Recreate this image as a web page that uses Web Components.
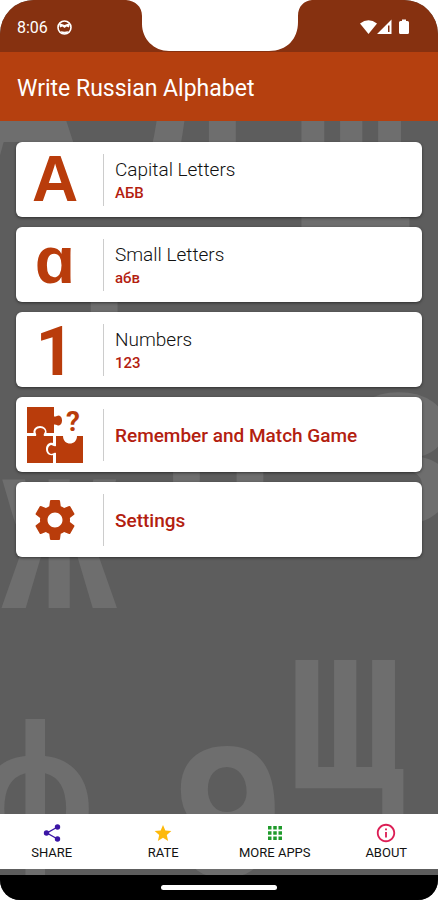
<!DOCTYPE html>
<html lang="en">
<head>
<meta charset="utf-8">
<meta name="viewport" content="width=device-width, initial-scale=1">
<title>Write Russian Alphabet</title>
<style>
    body {
        margin: 0;
        background: #fff;
        font-family: Roboto, "Liberation Sans", sans-serif;
    }
</style>
</head>
<body>
<phone-screen>
    <status-bar slot="top" time="8:06"></status-bar>
    <app-bar slot="top">Write Russian Alphabet</app-bar>

    <menu-card label="Capital Letters" sample="АБВ">
        <big-glyph slot="icon" size="64">A</big-glyph>
    </menu-card>
    <menu-card label="Small Letters" sample="абв">
        <big-glyph slot="icon" size="66" lowercase>ɑ</big-glyph>
    </menu-card>
    <menu-card label="Numbers" sample="123">
        <big-glyph slot="icon" size="68" digit>1</big-glyph>
    </menu-card>
    <menu-card label="Remember and Match Game" strong>
        <puzzle-icon slot="icon"></puzzle-icon>
    </menu-card>
    <menu-card label="Settings" strong>
        <gear-icon slot="icon"></gear-icon>
    </menu-card>

    <bottom-nav slot="bottom">
        <nav-item label="SHARE">
            <svg width="22" height="22" viewBox="0 0 22 22" fill="#3b15a5">
                <path d="M16.500 5 6 11l10.500 6" fill="none" stroke="#3b15a5" stroke-width="1.400"/>
                <circle cx="16.500" cy="5" r="2.700"/><circle cx="5.500" cy="11" r="2.700"/><circle cx="16.500" cy="17" r="2.700"/>
            </svg>
        </nav-item>
        <nav-item label="RATE">
            <svg width="20" height="22" viewBox="0 0 24 24" fill="#fdb90b">
                <path d="M12 17.77 18.18 21.5l-1.64-7.03L22 9.74l-7.19-.61L12 2.5 9.19 9.13 2 9.74l5.46 4.73L5.82 21.5z"/>
            </svg>
        </nav-item>
        <nav-item label="MORE APPS">
            <svg width="22" height="22" viewBox="0 0 22 22" fill="#1f9a2b">
                <path d="M4 4h3.500v3.500H4zM9.250 4h3.500v3.500h-3.500zM14.500 4H18v3.500h-3.500zM4 9.250h3.500v3.500H4zM9.250 9.250h3.500v3.500h-3.500zM14.500 9.250H18v3.500h-3.500zM4 14.500h3.500V18H4zM9.250 14.500h3.500V18h-3.500zM14.500 14.500H18V18h-3.500z"/>
            </svg>
        </nav-item>
        <nav-item label="ABOUT">
            <svg width="22" height="22" viewBox="0 0 24 24" fill="#dc1e55">
                <path d="M11 7h2v2h-2zm0 4h2v6h-2zm1-9C6.48 2 2 6.48 2 12s4.48 10 10 10 10-4.48 10-10S17.52 2 12 2zm0 18c-4.41 0-8-3.59-8-8s3.59-8 8-8 8 3.59 8 8-3.59 8-8 8z"/>
            </svg>
        </nav-item>
    </bottom-nav>
</phone-screen>

<script>
// Small helper: open a shadow root and fill it from a template
function render(host, html) {
    const template = document.createElement('template');
    template.innerHTML = html;
    host.attachShadow({ mode: 'open' }).appendChild(template.content.cloneNode(true));
}

class PhoneScreen extends HTMLElement {
    constructor() {
        super();
        render(this, `
            <style>
                :host {
                    display: flex;
                    flex-direction: column;
                    min-height: 100vh;
                    background: #5d5d5d;
                    border-radius: 34px 34px 20px 20px;
                    overflow: hidden;
                }
                .content {
                    position: relative;
                    flex: 1;
                    display: flex;
                    flex-direction: column;
                    overflow: hidden;
                }
                main {
                    position: relative;
                    flex: 1;
                    display: flex;
                    flex-direction: column;
                    gap: 10px;
                    padding: 21px 16px;
                }
                ::slotted([slot="bottom"]) { position: relative; margin-bottom: 6px; }
                .gesture {
                    display: flex;
                    justify-content: center;
                    align-items: center;
                    height: 25px;
                    background: #000;
                }
                .gesture span {
                    width: 116px;
                    height: 5px;
                    border-radius: 3px;
                    background: #fff;
                }
            </style>
            <slot name="top"></slot>
            <div class="content">
                <letter-backdrop></letter-backdrop>
                <main><slot></slot></main>
                <slot name="bottom"></slot>
            </div>
            <div class="gesture"><span></span></div>
        `);
    }
}

// Faint letters scattered behind the menu
class LetterBackdrop extends HTMLElement {
    constructor() {
        super();
        render(this, `
            <style>
                :host { display: block; position: absolute; inset: 0; }
                svg { display: block; width: 100%; height: 100%; }
                text {
                    font-family: "Liberation Mono", monospace;
                    font-weight: bold;
                    font-size: 194px;
                    fill: #6e6e6e;
                }
            </style>
            <svg aria-hidden="true">
                <text x="-33" y="52">А</text>
                <text x="132" y="68">Л</text>
                <text x="293" y="117">Щ</text>
                <text x="46" y="219">т</text>
                <text x="1" y="487">Ж</text>
                <text x="160" y="398">п</text>
                <text x="341" y="402">З</text>
                <text x="287" y="668">Щ</text>
                <text x="-23" y="740">ф</text>
                <text x="170" y="755">9</text>
            </svg>
        `);
    }
}

class StatusBar extends HTMLElement {
    constructor() {
        super();
        render(this, `
            <style>
                :host {
                    position: relative;
                    box-sizing: border-box;
                    display: flex;
                    align-items: center;
                    justify-content: space-between;
                    height: 52px;
                    padding: 2px 29px 0 17px;
                    background: #863110;
                    color: #fff;
                    font-size: 16px;
                }
                div { display: flex; align-items: center; }
                .left { gap: 9px; }
                .battery { margin-left: 7px; }
                .notch {
                    position: absolute;
                    top: 0;
                    left: 50%;
                    transform: translateX(-50%);
                }
            </style>
            <div class="left">
                <time></time>
                <svg width="15" height="15" viewBox="0 0 15 15">
                    <circle cx="7.5" cy="7.5" r="6.5" fill="none" stroke="#fff" stroke-width="1.6"/>
                    <path d="M2 3 7.5 5 13 3 12 7.500 9.5 6.500 7.500 8 5.500 6.500 3 7.500z" fill="#fff"/>
                    <path d="M4 11c2 1 5 1 7 0l-1 2.500H5z" fill="#fff"/>
                </svg>
            </div>
            <div>
                <svg width="17" height="16" viewBox="0 0 17 16" fill="#fff"><path d="M0 4.5Q8.500-2 17 4.500L8.500 15z"/></svg>
                <svg width="15" height="16" viewBox="0 0 15 16" fill="#fff"><path fill-rule="evenodd" d="M14.500.5V15H0zM11 6.500V13h1.500V6.500z"/></svg>
                <svg class="battery" width="10" height="16" viewBox="0 0 10 16" fill="#fff"><path d="M3 .5h4V2h1.500Q10 2 10 3.500v10Q10 15 8.500 15h-7Q0 15 0 13.500v-10Q0 2 1.500 2H3z"/></svg>
            </div>
            <svg class="notch" width="186" height="52" viewBox="0 0 186 52" fill="#fff">
                <path d="M0 0H186C178 1 172 6 172 16V22C172 39 161 51 143 51H43C28 51 16 39 16 24V16C16 6 9 1 0 0z"/>
            </svg>
        `);
    }

    connectedCallback() {
        this.shadowRoot.querySelector('time').textContent = this.getAttribute('time');
    }
}

class AppBar extends HTMLElement {
    constructor() {
        super();
        render(this, `
            <style>
                :host {
                    box-sizing: border-box;
                    display: flex;
                    align-items: center;
                    height: 69px;
                    padding: 4px 17px 0;
                    background: #b5400f;
                    color: #fff;
                }
                h1 { margin: 0; font-size: 23px; line-height: 28px; font-weight: 400; }
            </style>
            <h1><slot></slot></h1>
        `);
    }
}

class MenuCard extends HTMLElement {
    constructor() {
        super();
        render(this, `
            <style>
                :host { display: block; }
                button {
                    display: flex;
                    align-items: center;
                    width: 100%;
                    height: 75px;
                    padding: 0;
                    border: 0;
                    border-radius: 6px;
                    background: #fff;
                    box-shadow: 0 1px 3px rgba(0, 0, 0, .5);
                    color: #111;
                    font: inherit;
                    text-align: left;
                    cursor: pointer;
                }
                .icon {
                    display: flex;
                    align-items: center;
                    justify-content: center;
                    width: 78px;
                    height: 100%;
                }
                .text {
                    box-sizing: border-box;
                    display: flex;
                    flex-direction: column;
                    justify-content: center;
                    height: 52px;
                    margin-left: 9px;
                    padding: 2px 0 0 11px;
                    border-left: 1px solid #ccc;
                }
                .label { font-size: 19px; line-height: 24px; font-weight: 300; }
                .sample { color: #b3200f; font-size: 15px; line-height: 22px; font-weight: 500; }
                .sample:empty { display: none; }
                :host([strong]) .label { color: #b3200f; font-weight: 500; }
            </style>
            <button type="button">
                <span class="icon"><slot name="icon"></slot></span>
                <span class="text"><span class="label"></span><span class="sample"></span></span>
            </button>
        `);
    }

    connectedCallback() {
        this.shadowRoot.querySelector('.label').textContent = this.getAttribute('label');
        this.shadowRoot.querySelector('.sample').textContent = this.getAttribute('sample') || '';
    }
}

class BigGlyph extends HTMLElement {
    constructor() {
        super();
        render(this, `
            <style>
                :host {
                    display: block;
                    color: #b93c0b;
                    font-family: "Liberation Sans", sans-serif;
                    font-weight: bold;
                    line-height: 75px;
                }
                /* no ascender, so lift it to the optical middle */
                :host([lowercase]) { padding-bottom: 8px; }
                :host([digit]) { padding-top: 5px; font-family: Roboto, sans-serif; }
            </style>
            <slot></slot>
        `);
    }

    connectedCallback() {
        this.style.fontSize = this.getAttribute('size') + 'px';
    }
}

class PuzzleIcon extends HTMLElement {
    constructor() {
        super();
        render(this, `
            <style>
                :host { display: block; }
                svg { display: block; }
                text { font: bold 28px Roboto, sans-serif; }
            </style>
            <svg width="58" height="58" viewBox="0 0 58 58" fill="#b93c0b" aria-hidden="true">
                <path d="M1 1H28V10.500C30 11 31 9.500 33 9.500C37 10.500 37 18.500 33 19.500C31 19.500 30 18 28 18.500V27H20.500C21 23 18 20 14 20C10 20 7 23 7.500 27H1z"/>
                <path d="M1 30H10C11 28 9 27 9.500 25C10.500 21 18 21 19 25C19 27 17 28 18 30H27V37C23 36 20 39 20 43C20 47 23 50 27 49V57H1z"/>
                <path d="M30 30H37C37 40 51 40 51 30H57V57H30V47C28 46 27 48 25 48C21 47 21 40 25 39C27 39 28 41 30 40z"/>
                <text x="40" y="25">?</text>
            </svg>
        `);
    }
}

class GearIcon extends HTMLElement {
    constructor() {
        super();
        render(this, `
            <style>
                :host, svg { display: block; }
            </style>
            <svg width="50" height="50" viewBox="0 0 24 24" fill="#b93c0b" aria-hidden="true">
                <path d="M19.140 12.940c.04-.3.06-.61.06-.94 0-.32-.02-.64-.07-.94l2.030-1.580c.18-.14.23-.41.12-.61l-1.920-3.320c-.12-.22-.37-.29-.59-.22l-2.390.96c-.5-.38-1.030-.7-1.620-.94l-.36-2.540c-.04-.24-.24-.41-.48-.41h-3.840c-.24 0-.43.17-.47.41l-.36 2.540c-.59.24-1.130.57-1.620.94l-2.390-.96c-.22-.08-.47 0-.59.22L2.740 8.870c-.12.21-.08.47.12.61l2.030 1.580c-.05.3-.09.63-.09.94s.02.64.07.94l-2.030 1.580c-.18.14-.23.41-.12.61l1.920 3.320c.12.22.37.29.59.22l2.390-.96c.5.38 1.030.7 1.620.94l.36 2.540c.05.24.24.41.48.41h3.840c.24 0 .44-.17.47-.41l.36-2.540c.59-.24 1.130-.56 1.620-.94l2.390.96c.22.08.47 0 .59-.22l1.920-3.320c.12-.22.07-.47-.12-.61l-2.010-1.580zM12 15.600c-1.980 0-3.600-1.620-3.600-3.600s1.620-3.600 3.600-3.600 3.600 1.620 3.600 3.600-1.620 3.600-3.600 3.600z"/>
            </svg>
        `);
    }
}

class BottomNav extends HTMLElement {
    constructor() {
        super();
        render(this, `
            <style>
                :host { display: block; background: #fff; }
                nav {
                    display: flex;
                    height: 55px;
                    margin: 0 -4px;
                }
                ::slotted(*) { flex: 1; }
            </style>
            <nav><slot></slot></nav>
        `);
    }
}

class NavItem extends HTMLElement {
    constructor() {
        super();
        render(this, `
            <style>
                :host { display: block; }
                button {
                    display: flex;
                    flex-direction: column;
                    align-items: center;
                    justify-content: center;
                    width: 100%;
                    height: 100%;
                    padding: 0;
                    border: 0;
                    background: none;
                    color: #111;
                    font: inherit;
                    font-size: 13px;
                    line-height: 18px;
                    cursor: pointer;
                }
                ::slotted(svg) { display: block; }
            </style>
            <button type="button"><slot></slot><span></span></button>
        `);
    }

    connectedCallback() {
        this.shadowRoot.querySelector('span').textContent = this.getAttribute('label');
    }
}

customElements.define('letter-backdrop', LetterBackdrop);
customElements.define('status-bar', StatusBar);
customElements.define('app-bar', AppBar);
customElements.define('big-glyph', BigGlyph);
customElements.define('puzzle-icon', PuzzleIcon);
customElements.define('gear-icon', GearIcon);
customElements.define('menu-card', MenuCard);
customElements.define('nav-item', NavItem);
customElements.define('bottom-nav', BottomNav);
customElements.define('phone-screen', PhoneScreen);
</script>
</body>
</html>
